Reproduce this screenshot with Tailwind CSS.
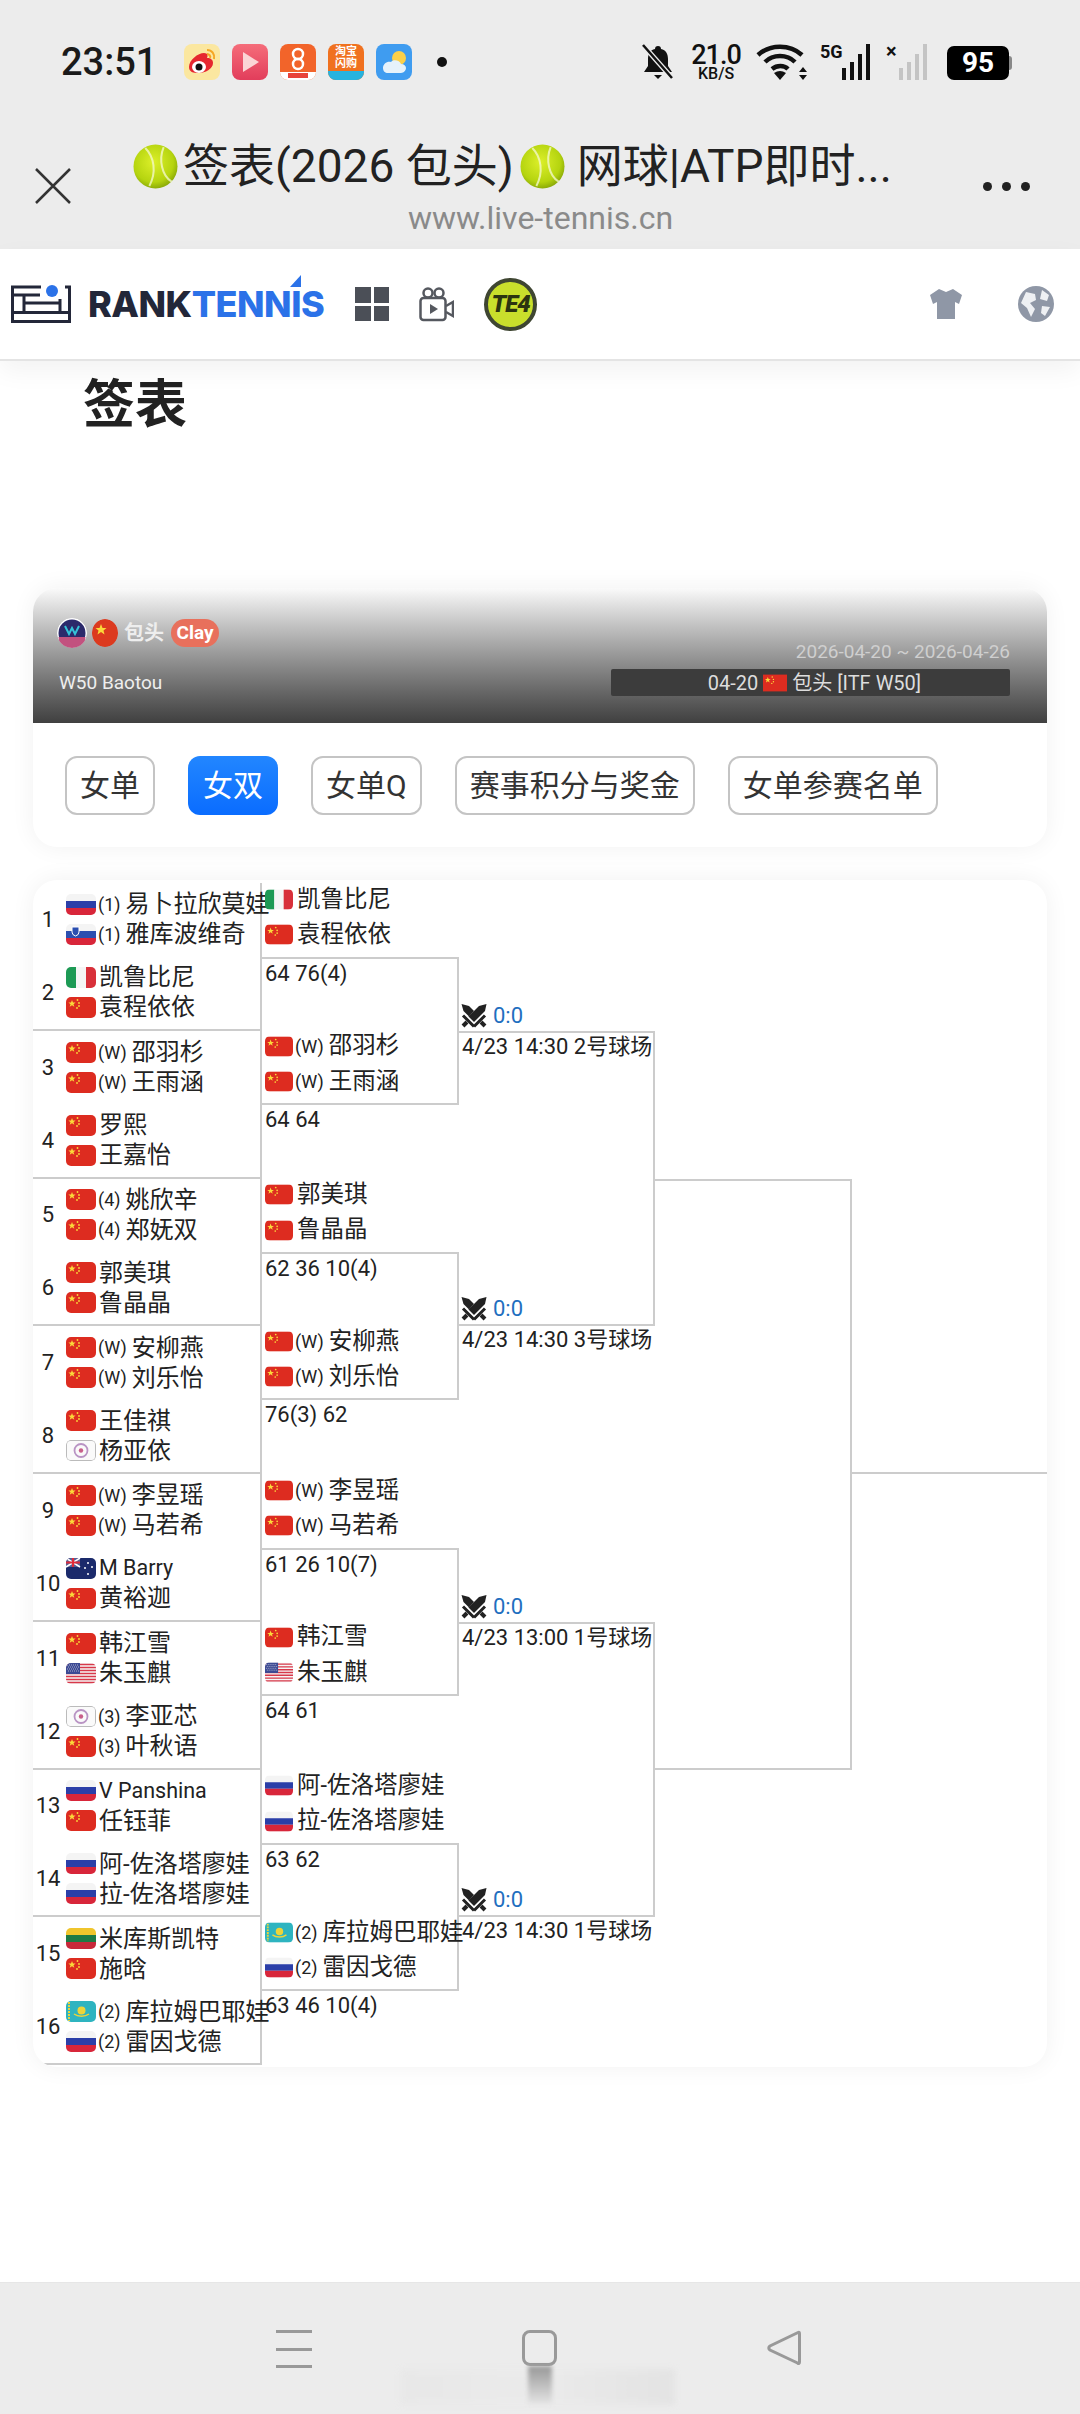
<!DOCTYPE html>
<html lang="en">
<head>
    <meta charset="UTF-8">
    <meta name="viewport" content="width=device-width, initial-scale=1.0">
    <title>签表</title>
    <script src="https://cdn.jsdelivr.net/npm/@tailwindcss/browser@4"></script>
</head>
<body class="w-[1080px] h-[2414px] overflow-hidden bg-white flex flex-col text-[#222] font-['Roboto','Noto_Sans_CJK_SC',sans-serif]">
    <!-- shared flags and small icons -->
    <svg class="absolute w-0 h-0" width="0" height="0">
        <defs>
            <radialGradient id="ballFill" cx="0.45" cy="0.4" r="0.65"><stop offset="0" stop-color="#dcef2a"/><stop offset="0.7" stop-color="#b5d40f"/><stop offset="1" stop-color="#7f9e06"/></radialGradient>
            <linearGradient id="playFill" x1="0" y1="0" x2="0" y2="1"><stop offset="0" stop-color="#f56d7a"/><stop offset="1" stop-color="#e23d5b"/></linearGradient>
        </defs>
        <symbol id="ball" viewBox="0 0 44 44"><circle cx="22" cy="22" r="21.5" fill="url(#ballFill)"/><path d="M12 4c9 9 11 24 4 37M30 3c-5 12-2 28 8 34" fill="none" stroke="#f2f7c8" stroke-width="2" opacity=".8"/></symbol>
        <symbol id="ru" viewBox="0 0 30 21"><rect width="30" height="7" fill="#f4f4f4"/><rect y="7" width="30" height="7" fill="#2b3fa8"/><rect y="14" width="30" height="7" fill="#d8263a"/></symbol>
        <symbol id="si" viewBox="0 0 30 21"><rect width="30" height="7" fill="#f4f4f4"/><rect y="7" width="30" height="7" fill="#2b4fb0"/><rect y="14" width="30" height="7" fill="#d8263a"/><path d="M6 3h7v5q0 3-3.500 4q-3.500-1-3.500-4z" fill="#2b4fb0" stroke="#fff"/></symbol>
        <symbol id="it" viewBox="0 0 30 21"><rect width="10" height="21" fill="#1d9a55"/><rect x="10" width="10" height="21" fill="#f5f5f5"/><rect x="20" width="10" height="21" fill="#d8303a"/></symbol>
        <symbol id="cn" viewBox="0 0 30 21"><rect width="30" height="21" fill="#dd2c20"/><path d="M6 3l1 2.600h2.600l-2.100 1.600.8 2.600L6 8.200 3.700 9.800l.8-2.600-2.100-1.600H5z" fill="#fbd93a"/><circle cx="11.500" cy="3" r=".9" fill="#fbd93a"/><circle cx="13" cy="6" r=".9" fill="#fbd93a"/><circle cx="13" cy="9" r=".9" fill="#fbd93a"/><circle cx="11" cy="11" r=".9" fill="#fbd93a"/></symbol>
        <symbol id="tw" viewBox="0 0 30 21"><rect x=".5" y=".5" width="29" height="20" rx="3.500" fill="#fafafa" stroke="#bbb"/><circle cx="15" cy="10.500" r="6.500" fill="none" stroke="#b994c4" stroke-width="1.800"/><circle cx="15" cy="10.500" r="2.200" fill="#c85f8a"/></symbol>
        <symbol id="nz" viewBox="0 0 30 21"><rect width="30" height="21" fill="#1b2a6b"/><rect width="14" height="9" fill="#5a5f94"/><path d="M0 0l14 9M14 0L0 9" stroke="#fff" stroke-width="1.500"/><path d="M7 0v9M0 4.500h14" stroke="#e02b3a" stroke-width="2"/><g fill="#fff"><circle cx="22" cy="5" r="1"/><circle cx="26" cy="9" r="1"/><circle cx="19" cy="10" r="1"/><circle cx="22" cy="16" r="1"/></g></symbol>
        <symbol id="us" viewBox="0 0 30 21"><rect width="30" height="21" fill="#f6f6f6"/><path d="M0 1.500h30M0 4.500h30M0 7.500h30M0 10.500h30M0 13.500h30M0 16.500h30M0 19.500h30" stroke="#d8384a" stroke-width="1.500"/><rect width="14" height="11" fill="#3b4a94"/><path d="M1 2h12M2 4h11M1 6h12M2 8h11" stroke="#ccd" stroke-width=".8" stroke-dasharray="1 1"/></symbol>
        <symbol id="lt" viewBox="0 0 30 21"><rect width="30" height="7" fill="#f0c52c"/><rect y="7" width="30" height="7" fill="#1e7a45"/><rect y="14" width="30" height="7" fill="#c8283a"/></symbol>
        <symbol id="kz" viewBox="0 0 30 21"><rect width="30" height="21" fill="#2eb4c0"/><circle cx="15.500" cy="9.500" r="4" fill="#ecd43a"/><path d="M8 13c4 3 11 3 15 0" stroke="#ecd43a" stroke-width="1.500" fill="none"/><path d="M3 1v19" stroke="#ecd43a" stroke-width="2" stroke-dasharray="2 1"/></symbol>
        <symbol id="swords" viewBox="0 0 26 24"><path d="M25.500 0l-7.500 2L7.500 12.500l5.500 5.500L24 7z" fill="#222"/><path d="M.5 0l7.500 2 5 5-5 5.500L2.500 7z" fill="#222"/><path d="M2 11.500l11 11M24 11.500L13 22.500" stroke="#222" stroke-width="3" fill="none"/><path d="M6 18l-4 4M20 18l4 4" stroke="#222" stroke-width="4" fill="none"/></symbol>
    </svg>

    <!-- browser chrome -->
    <header class="h-[249px] shrink-0 bg-[#ececec] flex flex-col">
        <div class="h-[124px] relative flex items-center pl-[61px] pr-[68px]">
            <span class="text-[38px] font-medium leading-none text-[#1a1a1a] w-[123px]">23:51</span>
            <div class="flex items-center gap-[12px]">
                <svg class="w-[36px] h-[36px] rounded-[8px]" viewBox="0 0 36 36"><rect width="36" height="36" fill="#fbe7a0"/><path d="M5 23c0-7 9-14 15-14 4 0 4 3 3 5 4 0 6 2 6 5 0 6-8 10-14 10S5 28 5 23z" fill="#e6272f"/><ellipse cx="15" cy="23" rx="7" ry="6" fill="#fff"/><circle cx="15" cy="23" r="3.500" fill="#111"/><path d="M23 6c5 0 8 4 7 9M23 10c2 0 4 2 3 4" fill="none" stroke="#f5a623" stroke-width="2"/></svg>
                <svg class="w-[36px] h-[36px] rounded-[8px]" viewBox="0 0 36 36"><rect width="36" height="36" fill="url(#playFill)"/><path d="M11 8l16 10-16 10z" fill="#fbd5d5"/></svg>
                <svg class="w-[36px] h-[36px] rounded-[8px]" viewBox="0 0 36 36"><rect width="36" height="36" fill="#f2642a"/><circle cx="18" cy="10" r="5" fill="none" stroke="#fff" stroke-width="2.500"/><circle cx="18" cy="20" r="5" fill="none" stroke="#fff" stroke-width="2.500"/><rect y="28" width="36" height="8" fill="#fff"/><rect x="8" y="29" width="20" height="5" fill="#e8433a"/></svg>
                <div class="w-[36px] h-[36px] rounded-[8px] overflow-hidden bg-[#f0711f] flex flex-col items-center text-white text-[11px] leading-[12px] font-bold">
                    <span class="mt-[2px]">淘宝</span><span>闪购</span>
                    <span class="mt-auto w-full h-[9px] bg-[#27b3df]"></span>
                </div>
                <svg class="w-[36px] h-[36px] rounded-[8px]" viewBox="0 0 36 36"><rect width="36" height="36" fill="#3f9cf0"/><circle cx="23" cy="14" r="7" fill="#fbd04a"/><path d="M7 24c0-4 4-7 8-6 2-3 9-2 10 2 3 0 5 2 5 4s-2 5-5 5H12c-3 0-5-2-5-5z" fill="#e6f2fb"/></svg>
                <span class="w-[10px] h-[10px] rounded-full bg-[#111] ml-[13px]"></span>
            </div>
            <div class="ml-auto flex items-center">
                <svg class="w-[36px] h-[36px]" viewBox="0 0 36 36"><path d="M18 2c2 0 3 1 3 3 5 1 7 5 7 10v7l4 6H4l4-6v-7c0-5 2-9 7-10 0-2 1-3 3-3z" fill="#111"/><path d="M14 31h8l-4 4z" fill="#111"/><path d="M3 1l29 33" stroke="#ececec" stroke-width="5"/><path d="M3 1l29 33" stroke="#111" stroke-width="2.500"/></svg>
                <div class="ml-[14px] w-[52px] flex flex-col items-center font-medium text-[#111]">
                    <span class="text-[27px] leading-[22px] tracking-[-1px]">21.0</span>
                    <span class="text-[16px] leading-[15px]">KB/S</span>
                </div>
                <svg class="ml-[14px] w-[52px] h-[36px]" viewBox="0 0 52 36"><path d="M2 11c12-11 32-11 44 0M9 18c8-8 22-8 30 0M16 25c5-4 12-4 16 0" fill="none" stroke="#111" stroke-width="4.500"/><path d="M24 36l-6-7q6-4 12 0z" fill="#111"/><path d="M47 23l4 5h-8zM47 36l4-5h-8z" fill="#111"/></svg>
                <div class="ml-[12px] w-[50px] h-[36px] relative flex items-end justify-end gap-[4px]">
                    <span class="absolute left-0 top-[-2px] text-[18px] leading-[20px] font-bold text-[#111]">5G</span>
                    <span class="w-[4px] h-[12px] bg-[#111]"></span><span class="w-[4px] h-[18px] bg-[#111]"></span><span class="w-[4px] h-[26px] bg-[#111]"></span><span class="w-[4px] h-[36px] bg-[#111]"></span>
                </div>
                <div class="ml-[16px] w-[41px] h-[36px] relative flex items-end justify-end gap-[4px]">
                    <span class="absolute left-0 top-[-3px] text-[20px] leading-[20px] font-bold text-[#111]">×</span>
                    <span class="w-[4px] h-[12px] bg-[#c4c4c4]"></span><span class="w-[4px] h-[18px] bg-[#c4c4c4]"></span><span class="w-[4px] h-[26px] bg-[#c4c4c4]"></span><span class="w-[4px] h-[36px] bg-[#c4c4c4]"></span>
                </div>
                <div class="ml-[20px] mt-[2px] flex items-center">
                    <span class="w-[62px] h-[34px] rounded-[7px] bg-black text-white text-[28px] leading-[34px] font-bold text-center">95</span>
                    <span class="w-[3px] h-[14px] rounded-r-full bg-[#888]"></span>
                </div>
            </div>
        </div>
        <div class="flex-1 flex pl-[35px] pr-[50px]">
            <svg class="mt-[44px] w-[36px] h-[36px] shrink-0" viewBox="0 0 36 36"><path d="M1 1l34 34M35 1L1 35" stroke="#333" stroke-width="2.500"/></svg>
            <div class="flex-1 flex flex-col items-center min-w-0">
                <div class="mt-[17px] h-[50px] flex items-center text-[46px] leading-[50px] text-[#222] whitespace-nowrap ml-[-29px]">
                    <svg class="w-[45px] h-[45px] mr-[5px] shrink-0"><use href="#ball"/></svg>签表(2026 包头)<svg class="w-[45px] h-[45px] mx-[6px] shrink-0"><use href="#ball"/></svg><span class="ml-[6px]">网球|ATP即时...</span>
                </div>
                <span class="mt-[9px] text-[32px] leading-[36px] text-[#8a8a8a] ml-[27px]">www.live-tennis.cn</span>
            </div>
            <div class="mt-[58px] w-[47px] flex justify-between shrink-0 h-[9px]">
                <span class="w-[9px] h-[9px] rounded-full bg-[#222]"></span><span class="w-[9px] h-[9px] rounded-full bg-[#222]"></span><span class="w-[9px] h-[9px] rounded-full bg-[#222]"></span>
            </div>
        </div>
    </header>

    <!-- site nav -->
    <nav class="h-[112px] shrink-0 relative z-10 bg-white border-b-2 border-[#e4e4e4] shadow-[0_10px_24px_rgba(0,0,0,0.05)] flex items-center pl-[11px] pr-[26px]">
        <svg class="w-[60px] h-[38px]" viewBox="0 0 60 38" fill="none" stroke="#232739" stroke-width="3"><path d="M30 2H1.500V36.500H58.500V2H54M1.500 10H29M13 10V27M13 18H48M1.500 27.500H58.500M49 14V27"/><circle cx="41" cy="6" r="6" fill="#2b72e8" stroke="none"/></svg>
        <span class="ml-[17px] text-[36px] leading-none font-extrabold tracking-[-0.5px] font-['Inter',sans-serif] text-[#232739] whitespace-nowrap">RANK<span class="text-[#2b72e8]">TENN<span class="relative">I<svg class="absolute left-[-1px] top-[-7px] w-[11px] h-[12px]" viewBox="0 0 11 12"><path d="M11 0v12H0z" fill="#2b72e8"/></svg></span>S</span></span>
        <div class="ml-[31px] w-[34px] h-[34px] grid grid-cols-2 gap-[3px]">
            <span class="bg-[#4b4f57]"></span><span class="bg-[#4b4f57]"></span><span class="bg-[#4b4f57]"></span><span class="bg-[#4b4f57]"></span>
        </div>
        <svg class="ml-[30px] w-[35px] h-[35px]" viewBox="0 0 35 35" fill="none" stroke="#55585f" stroke-width="2.500"><circle cx="9" cy="6" r="4.500"/><circle cx="20" cy="6" r="4.500"/><rect x="1.500" y="11" width="25" height="22" rx="3"/><path d="M27 19l7-4v14l-7-4"/><path d="M11 17l8 5-8 5z" fill="#55585f" stroke="none"/></svg>
        <div class="ml-[30px] w-[53px] h-[53px] rounded-full border-[4px] border-[#3f4632] bg-[#c9df2c] flex items-center justify-center text-[24px] leading-none font-black italic text-[#2c3410] tracking-[-1px]">TE4</div>
        <svg class="ml-auto w-[32px] h-[30px]" viewBox="0 0 32 30"><path d="M9 0l7 3 7-3 9 6-3 9-4-2v17H7V13l-4 2-3-9z" fill="#8f97a6"/></svg>
        <svg class="ml-[56px] w-[36px] h-[36px]" viewBox="0 0 36 36"><circle cx="18" cy="18" r="18" fill="#8f97a6"/><path d="M8 6l9 2 1 6-6 3 5 6-4 8-4-9-6-5zM24 4l7 5-2 6-7-2zM24 20l8 1-5 9-4-3z" fill="#eef0f3"/></svg>
    </nav>

    <main class="flex-1 min-h-0">
        <h1 class="ml-[83px] mt-[15px] text-[52px] leading-[60px] font-bold text-[#222]">签表</h1>

        <section class="mx-[33px] mt-[152px] rounded-[24px] overflow-hidden bg-white shadow-[0_0_24px_rgba(0,0,0,0.06)]">
            <div class="h-[135px] bg-gradient-to-b from-[#fafafa] to-[#404040] pt-[26px] pb-[27px] pl-[24px] pr-[37px] flex justify-between items-end">
                <div class="flex flex-col">
                    <div class="flex items-center">
                        <svg class="w-[30px] h-[30px] rounded-full" viewBox="0 0 30 30"><circle cx="15" cy="15" r="15" fill="#fff"/><circle cx="15" cy="15" r="13.500" fill="#2c2a6b"/><path d="M1.500 19h27a13.500 13.500 0 0 1-27 0z" fill="#c2527f"/><path d="M8 8l4 8 3-6 3 6 4-8" stroke="#35c3d8" stroke-width="2" fill="none"/></svg>
                        <svg class="ml-[5px] w-[26px] h-[28px] rounded-full" viewBox="0 0 26 28"><ellipse cx="13" cy="14" rx="13" ry="14" fill="#dc3a1f"/><path d="M9 5l1.500 4h4l-3 2.500 1 4L9 13l-3.500 2.500 1-4-3-2.500h4z" fill="#fbd93a"/></svg>
                        <span class="ml-[6px] text-[20px] leading-none font-bold text-[#eee]">包头</span>
                        <span class="ml-[7px] w-[48px] h-[28px] rounded-full bg-[#e8705c] text-white text-[19px] leading-[28px] font-bold text-center">Clay</span>
                    </div>
                    <span class="mt-[21px] h-[27px] text-[19px] leading-[27px] text-[#eee] ml-[2px]">W50 Baotou</span>
                </div>
                <div class="flex flex-col items-end">
                    <span class="text-[19px] leading-[24px] text-[#cfcfcf]">2026-04-20 ~ 2026-04-26</span>
                    <div class="mt-[5px] w-[399px] h-[27px] rounded-[2px] bg-[#3c3c3c] pl-[8px] flex items-center justify-center text-[20px] leading-none text-[#ddd]">04-20&nbsp;<svg class="w-[24px] h-[18px]"><use href="#cn"/></svg>&nbsp;包头 [ITF W50]</div>
                </div>
            </div>
            <div class="h-[124px] pt-[33px] pl-[32px] flex items-start gap-[33px] text-[30px] text-[#333]">
                <button class="h-[59px] px-[13px] rounded-[12px] border-2 border-[#c4c4c4] leading-none">女单</button>
                <button class="h-[59px] px-[15px] rounded-[12px] bg-gradient-to-b from-[#2286ff] to-[#0a6cff] text-white leading-none">女双</button>
                <button class="h-[59px] px-[13px] rounded-[12px] border-2 border-[#c4c4c4] leading-none">女单Q</button>
                <button class="h-[59px] px-[13px] rounded-[12px] border-2 border-[#c4c4c4] leading-none">赛事积分与奖金</button>
                <button class="h-[59px] px-[13px] rounded-[12px] border-2 border-[#c4c4c4] leading-none">女单参赛名单</button>
            </div>
        </section>

        <!-- draw -->
        <section class="mx-[33px] mt-[33px] h-[1187px] pt-[3px] rounded-[24px] overflow-hidden bg-white shadow-[0_0_24px_rgba(0,0,0,0.06)] flex text-[22px] whitespace-nowrap">
            <div class="w-[229px] shrink-0 flex flex-col text-[24px]">
                <div class="h-[147.75px] border-r-2 border-b-2 border-[#ccc] flex flex-col">
                    <div class="h-1/2 flex items-center"><span class="w-[30px] shrink-0 text-center text-[22px]">1</span><div class="ml-[3px] flex flex-col">
                        <div class="h-[30px] flex items-center"><svg class="w-[30px] h-[21px] shrink-0 rounded-[5px] mr-[2px]"><use href="#ru"/></svg><span class="text-[18px] mr-[5px]">(1)</span>易卜拉欣莫娃</div>
                        <div class="h-[30px] flex items-center"><svg class="w-[30px] h-[21px] shrink-0 rounded-[5px] mr-[2px]"><use href="#si"/></svg><span class="text-[18px] mr-[5px]">(1)</span>雅库波维奇</div>
                    </div></div>
                    <div class="h-1/2 flex items-center"><span class="w-[30px] shrink-0 text-center text-[22px]">2</span><div class="ml-[3px] flex flex-col">
                        <div class="h-[30px] flex items-center"><svg class="w-[30px] h-[21px] shrink-0 rounded-[5px] mr-[3px]"><use href="#it"/></svg>凯鲁比尼</div>
                        <div class="h-[30px] flex items-center"><svg class="w-[30px] h-[21px] shrink-0 rounded-[5px] mr-[3px]"><use href="#cn"/></svg>袁程依依</div>
                    </div></div>
                </div>
                <div class="h-[147.75px] border-r-2 border-b-2 border-[#ccc] flex flex-col">
                    <div class="h-1/2 flex items-center"><span class="w-[30px] shrink-0 text-center text-[22px]">3</span><div class="ml-[3px] flex flex-col">
                        <div class="h-[30px] flex items-center"><svg class="w-[30px] h-[21px] shrink-0 rounded-[5px] mr-[2px]"><use href="#cn"/></svg><span class="text-[18px] mr-[5px]">(W)</span>邵羽杉</div>
                        <div class="h-[30px] flex items-center"><svg class="w-[30px] h-[21px] shrink-0 rounded-[5px] mr-[2px]"><use href="#cn"/></svg><span class="text-[18px] mr-[5px]">(W)</span>王雨涵</div>
                    </div></div>
                    <div class="h-1/2 flex items-center"><span class="w-[30px] shrink-0 text-center text-[22px]">4</span><div class="ml-[3px] flex flex-col">
                        <div class="h-[30px] flex items-center"><svg class="w-[30px] h-[21px] shrink-0 rounded-[5px] mr-[3px]"><use href="#cn"/></svg>罗熙</div>
                        <div class="h-[30px] flex items-center"><svg class="w-[30px] h-[21px] shrink-0 rounded-[5px] mr-[3px]"><use href="#cn"/></svg>王嘉怡</div>
                    </div></div>
                </div>
                <div class="h-[147.75px] border-r-2 border-b-2 border-[#ccc] flex flex-col">
                    <div class="h-1/2 flex items-center"><span class="w-[30px] shrink-0 text-center text-[22px]">5</span><div class="ml-[3px] flex flex-col">
                        <div class="h-[30px] flex items-center"><svg class="w-[30px] h-[21px] shrink-0 rounded-[5px] mr-[2px]"><use href="#cn"/></svg><span class="text-[18px] mr-[5px]">(4)</span>姚欣辛</div>
                        <div class="h-[30px] flex items-center"><svg class="w-[30px] h-[21px] shrink-0 rounded-[5px] mr-[2px]"><use href="#cn"/></svg><span class="text-[18px] mr-[5px]">(4)</span>郑妩双</div>
                    </div></div>
                    <div class="h-1/2 flex items-center"><span class="w-[30px] shrink-0 text-center text-[22px]">6</span><div class="ml-[3px] flex flex-col">
                        <div class="h-[30px] flex items-center"><svg class="w-[30px] h-[21px] shrink-0 rounded-[5px] mr-[3px]"><use href="#cn"/></svg>郭美琪</div>
                        <div class="h-[30px] flex items-center"><svg class="w-[30px] h-[21px] shrink-0 rounded-[5px] mr-[3px]"><use href="#cn"/></svg>鲁晶晶</div>
                    </div></div>
                </div>
                <div class="h-[147.75px] border-r-2 border-b-2 border-[#ccc] flex flex-col">
                    <div class="h-1/2 flex items-center"><span class="w-[30px] shrink-0 text-center text-[22px]">7</span><div class="ml-[3px] flex flex-col">
                        <div class="h-[30px] flex items-center"><svg class="w-[30px] h-[21px] shrink-0 rounded-[5px] mr-[2px]"><use href="#cn"/></svg><span class="text-[18px] mr-[5px]">(W)</span>安柳燕</div>
                        <div class="h-[30px] flex items-center"><svg class="w-[30px] h-[21px] shrink-0 rounded-[5px] mr-[2px]"><use href="#cn"/></svg><span class="text-[18px] mr-[5px]">(W)</span>刘乐怡</div>
                    </div></div>
                    <div class="h-1/2 flex items-center"><span class="w-[30px] shrink-0 text-center text-[22px]">8</span><div class="ml-[3px] flex flex-col">
                        <div class="h-[30px] flex items-center"><svg class="w-[30px] h-[21px] shrink-0 rounded-[5px] mr-[3px]"><use href="#cn"/></svg>王佳祺</div>
                        <div class="h-[30px] flex items-center"><svg class="w-[30px] h-[21px] shrink-0 rounded-[5px] mr-[3px]"><use href="#tw"/></svg>杨亚依</div>
                    </div></div>
                </div>
                <div class="h-[147.75px] border-r-2 border-b-2 border-[#ccc] flex flex-col">
                    <div class="h-1/2 flex items-center"><span class="w-[30px] shrink-0 text-center text-[22px]">9</span><div class="ml-[3px] flex flex-col">
                        <div class="h-[30px] flex items-center"><svg class="w-[30px] h-[21px] shrink-0 rounded-[5px] mr-[2px]"><use href="#cn"/></svg><span class="text-[18px] mr-[5px]">(W)</span>李昱瑶</div>
                        <div class="h-[30px] flex items-center"><svg class="w-[30px] h-[21px] shrink-0 rounded-[5px] mr-[2px]"><use href="#cn"/></svg><span class="text-[18px] mr-[5px]">(W)</span>马若希</div>
                    </div></div>
                    <div class="h-1/2 flex items-center"><span class="w-[30px] shrink-0 text-center text-[22px]">10</span><div class="ml-[3px] flex flex-col">
                        <div class="h-[30px] flex items-center text-[21.5px]"><svg class="w-[30px] h-[21px] shrink-0 rounded-[5px] mr-[3px]"><use href="#nz"/></svg>M Barry</div>
                        <div class="h-[30px] flex items-center"><svg class="w-[30px] h-[21px] shrink-0 rounded-[5px] mr-[3px]"><use href="#cn"/></svg>黄裕迦</div>
                    </div></div>
                </div>
                <div class="h-[147.75px] border-r-2 border-b-2 border-[#ccc] flex flex-col">
                    <div class="h-1/2 flex items-center"><span class="w-[30px] shrink-0 text-center text-[22px]">11</span><div class="ml-[3px] flex flex-col">
                        <div class="h-[30px] flex items-center"><svg class="w-[30px] h-[21px] shrink-0 rounded-[5px] mr-[3px]"><use href="#cn"/></svg>韩江雪</div>
                        <div class="h-[30px] flex items-center"><svg class="w-[30px] h-[21px] shrink-0 rounded-[5px] mr-[3px]"><use href="#us"/></svg>朱玉麒</div>
                    </div></div>
                    <div class="h-1/2 flex items-center"><span class="w-[30px] shrink-0 text-center text-[22px]">12</span><div class="ml-[3px] flex flex-col">
                        <div class="h-[30px] flex items-center"><svg class="w-[30px] h-[21px] shrink-0 rounded-[5px] mr-[2px]"><use href="#tw"/></svg><span class="text-[18px] mr-[5px]">(3)</span>李亚芯</div>
                        <div class="h-[30px] flex items-center"><svg class="w-[30px] h-[21px] shrink-0 rounded-[5px] mr-[2px]"><use href="#cn"/></svg><span class="text-[18px] mr-[5px]">(3)</span>叶秋语</div>
                    </div></div>
                </div>
                <div class="h-[147.75px] border-r-2 border-b-2 border-[#ccc] flex flex-col">
                    <div class="h-1/2 flex items-center"><span class="w-[30px] shrink-0 text-center text-[22px]">13</span><div class="ml-[3px] flex flex-col">
                        <div class="h-[30px] flex items-center text-[21.5px]"><svg class="w-[30px] h-[21px] shrink-0 rounded-[5px] mr-[3px]"><use href="#ru"/></svg>V Panshina</div>
                        <div class="h-[30px] flex items-center"><svg class="w-[30px] h-[21px] shrink-0 rounded-[5px] mr-[3px]"><use href="#cn"/></svg>任钰菲</div>
                    </div></div>
                    <div class="h-1/2 flex items-center"><span class="w-[30px] shrink-0 text-center text-[22px]">14</span><div class="ml-[3px] flex flex-col">
                        <div class="h-[30px] flex items-center"><svg class="w-[30px] h-[21px] shrink-0 rounded-[5px] mr-[3px]"><use href="#ru"/></svg>阿-佐洛塔廖娃</div>
                        <div class="h-[30px] flex items-center"><svg class="w-[30px] h-[21px] shrink-0 rounded-[5px] mr-[3px]"><use href="#ru"/></svg>拉-佐洛塔廖娃</div>
                    </div></div>
                </div>
                <div class="h-[147.75px] border-r-2 border-b-2 border-[#ccc] flex flex-col">
                    <div class="h-1/2 flex items-center"><span class="w-[30px] shrink-0 text-center text-[22px]">15</span><div class="ml-[3px] flex flex-col">
                        <div class="h-[30px] flex items-center"><svg class="w-[30px] h-[21px] shrink-0 rounded-[5px] mr-[3px]"><use href="#lt"/></svg>米库斯凯特</div>
                        <div class="h-[30px] flex items-center"><svg class="w-[30px] h-[21px] shrink-0 rounded-[5px] mr-[3px]"><use href="#cn"/></svg>施晗</div>
                    </div></div>
                    <div class="h-1/2 flex items-center"><span class="w-[30px] shrink-0 text-center text-[22px]">16</span><div class="ml-[3px] flex flex-col">
                        <div class="h-[30px] flex items-center"><svg class="w-[30px] h-[21px] shrink-0 rounded-[5px] mr-[2px]"><use href="#kz"/></svg><span class="text-[18px] mr-[5px]">(2)</span>库拉姆巴耶娃</div>
                        <div class="h-[30px] flex items-center"><svg class="w-[30px] h-[21px] shrink-0 rounded-[5px] mr-[2px]"><use href="#ru"/></svg><span class="text-[18px] mr-[5px]">(2)</span>雷因戈德</div>
                    </div></div>
                </div>
            </div>

            <!-- second round -->
            <div class="w-[197px] shrink-0 flex flex-col text-[23.5px]">
                <div class="h-[73.875px] pl-[3px] pb-[6px] flex flex-col justify-center">
                    <div class="h-[36px] flex items-center"><svg class="w-[28px] h-[21px] shrink-0 rounded-[5px] mr-[4px]"><use href="#it"/></svg>凯鲁比尼</div>
                    <div class="h-[36px] flex items-center"><svg class="w-[28px] h-[21px] shrink-0 rounded-[5px] mr-[4px]"><use href="#cn"/></svg>袁程依依</div>
                </div>
                <div class="h-[73.875px] pl-[3px] border-t-2 border-r-2 border-[#ccc] text-[22px] leading-[30px]">64 76(4)</div>
                <div class="h-[73.875px] pl-[3px] pb-[6px] border-r-2 border-b-2 border-[#ccc] flex flex-col justify-center">
                    <div class="h-[36px] flex items-center"><svg class="w-[28px] h-[21px] shrink-0 rounded-[5px] mr-[2px]"><use href="#cn"/></svg><span class="text-[18px] mr-[5px]">(W)</span>邵羽杉</div>
                    <div class="h-[36px] flex items-center"><svg class="w-[28px] h-[21px] shrink-0 rounded-[5px] mr-[2px]"><use href="#cn"/></svg><span class="text-[18px] mr-[5px]">(W)</span>王雨涵</div>
                </div>
                <div class="h-[73.875px] pl-[3px] text-[22px] leading-[30px]">64 64</div>

                <div class="h-[73.875px] pl-[3px] pb-[6px] flex flex-col justify-center">
                    <div class="h-[36px] flex items-center"><svg class="w-[28px] h-[21px] shrink-0 rounded-[5px] mr-[4px]"><use href="#cn"/></svg>郭美琪</div>
                    <div class="h-[36px] flex items-center"><svg class="w-[28px] h-[21px] shrink-0 rounded-[5px] mr-[4px]"><use href="#cn"/></svg>鲁晶晶</div>
                </div>
                <div class="h-[73.875px] pl-[3px] border-t-2 border-r-2 border-[#ccc] text-[22px] leading-[30px]">62 36 10(4)</div>
                <div class="h-[73.875px] pl-[3px] pb-[6px] border-r-2 border-b-2 border-[#ccc] flex flex-col justify-center">
                    <div class="h-[36px] flex items-center"><svg class="w-[28px] h-[21px] shrink-0 rounded-[5px] mr-[2px]"><use href="#cn"/></svg><span class="text-[18px] mr-[5px]">(W)</span>安柳燕</div>
                    <div class="h-[36px] flex items-center"><svg class="w-[28px] h-[21px] shrink-0 rounded-[5px] mr-[2px]"><use href="#cn"/></svg><span class="text-[18px] mr-[5px]">(W)</span>刘乐怡</div>
                </div>
                <div class="h-[73.875px] pl-[3px] text-[22px] leading-[30px]">76(3) 62</div>

                <div class="h-[73.875px] pl-[3px] pb-[6px] flex flex-col justify-center">
                    <div class="h-[36px] flex items-center"><svg class="w-[28px] h-[21px] shrink-0 rounded-[5px] mr-[2px]"><use href="#cn"/></svg><span class="text-[18px] mr-[5px]">(W)</span>李昱瑶</div>
                    <div class="h-[36px] flex items-center"><svg class="w-[28px] h-[21px] shrink-0 rounded-[5px] mr-[2px]"><use href="#cn"/></svg><span class="text-[18px] mr-[5px]">(W)</span>马若希</div>
                </div>
                <div class="h-[73.875px] pl-[3px] border-t-2 border-r-2 border-[#ccc] text-[22px] leading-[30px]">61 26 10(7)</div>
                <div class="h-[73.875px] pl-[3px] pb-[6px] border-r-2 border-b-2 border-[#ccc] flex flex-col justify-center">
                    <div class="h-[36px] flex items-center"><svg class="w-[28px] h-[21px] shrink-0 rounded-[5px] mr-[4px]"><use href="#cn"/></svg>韩江雪</div>
                    <div class="h-[36px] flex items-center"><svg class="w-[28px] h-[21px] shrink-0 rounded-[5px] mr-[4px]"><use href="#us"/></svg>朱玉麒</div>
                </div>
                <div class="h-[73.875px] pl-[3px] text-[22px] leading-[30px]">64 61</div>

                <div class="h-[73.875px] pl-[3px] pb-[6px] flex flex-col justify-center">
                    <div class="h-[36px] flex items-center"><svg class="w-[28px] h-[21px] shrink-0 rounded-[5px] mr-[4px]"><use href="#ru"/></svg>阿-佐洛塔廖娃</div>
                    <div class="h-[36px] flex items-center"><svg class="w-[28px] h-[21px] shrink-0 rounded-[5px] mr-[4px]"><use href="#ru"/></svg>拉-佐洛塔廖娃</div>
                </div>
                <div class="h-[73.875px] pl-[3px] border-t-2 border-r-2 border-[#ccc] text-[22px] leading-[30px]">63 62</div>
                <div class="h-[73.875px] pl-[3px] pb-[6px] border-r-2 border-b-2 border-[#ccc] flex flex-col justify-center">
                    <div class="h-[36px] flex items-center"><svg class="w-[28px] h-[21px] shrink-0 rounded-[5px] mr-[2px]"><use href="#kz"/></svg><span class="text-[18px] mr-[5px]">(2)</span>库拉姆巴耶娃</div>
                    <div class="h-[36px] flex items-center"><svg class="w-[28px] h-[21px] shrink-0 rounded-[5px] mr-[2px]"><use href="#ru"/></svg><span class="text-[18px] mr-[5px]">(2)</span>雷因戈德</div>
                </div>
                <div class="h-[73.875px] pl-[3px] text-[22px] leading-[30px]">63 46 10(4)</div>
            </div>

            <!-- quarter finals -->
            <div class="w-[196px] shrink-0 flex flex-col">
                <div class="h-[147.75px] pl-[2px] pb-[3px] flex items-end gap-[6px]"><svg class="w-[26px] h-[24px]"><use href="#swords"/></svg><span class="text-[#1f6fbf] leading-[24px]">0:0</span></div>
                <div class="h-[147.75px] pl-[3px] border-t-2 border-r-2 border-[#ccc] leading-[28px]">4/23 14:30 2号球场</div>
                <div class="h-[147.75px] pl-[2px] pb-[3px] border-r-2 border-b-2 border-[#ccc] flex items-end gap-[6px]"><svg class="w-[26px] h-[24px]"><use href="#swords"/></svg><span class="text-[#1f6fbf] leading-[24px]">0:0</span></div>
                <div class="h-[147.75px] pl-[3px] leading-[28px]">4/23 14:30 3号球场</div>
                <div class="h-[147.75px] pl-[2px] pb-[3px] flex items-end gap-[6px]"><svg class="w-[26px] h-[24px]"><use href="#swords"/></svg><span class="text-[#1f6fbf] leading-[24px]">0:0</span></div>
                <div class="h-[147.75px] pl-[3px] border-t-2 border-r-2 border-[#ccc] leading-[28px]">4/23 13:00 1号球场</div>
                <div class="h-[147.75px] pl-[2px] pb-[3px] border-r-2 border-b-2 border-[#ccc] flex items-end gap-[6px]"><svg class="w-[26px] h-[24px]"><use href="#swords"/></svg><span class="text-[#1f6fbf] leading-[24px]">0:0</span></div>
                <div class="h-[147.75px] pl-[3px] leading-[28px]">4/23 14:30 1号球场</div>
            </div>

            <!-- semi final and final lines -->
            <div class="w-[197px] shrink-0 flex flex-col">
                <div class="h-[295.5px]"></div>
                <div class="h-[591px] border-t-2 border-r-2 border-b-2 border-[#ccc]"></div>
            </div>
            <div class="flex-1 flex flex-col">
                <div class="h-[591px] border-b-2 border-[#ccc]"></div>
            </div>
        </section>
    </main>

    <!-- system nav -->
    <footer class="h-[132px] shrink-0 relative bg-[#ececec] border-t border-[#e6e6e6] flex justify-center gap-[210px] pt-[47px] pr-[3px]">
        <div class="w-[36px] h-[38px] flex flex-col justify-between"><span class="h-[3px] bg-[#999]"></span><span class="h-[3px] bg-[#999]"></span><span class="h-[3px] bg-[#999]"></span></div>
        <div class="w-[35px] h-[36px] rounded-[8px] border-[3px] border-[#999]"></div>
        <svg class="w-[34px] h-[36px]" viewBox="0 0 34 36"><path d="M31 2.500Q32.500 1.500 32.500 4V32Q32.500 34.500 30.500 33L3 20Q0.500 18 3 16z" fill="none" stroke="#999" stroke-width="3"/></svg>
        <div class="absolute left-[400px] top-[86px] w-[275px] h-[36px] bg-gradient-to-r from-[#e6e6e6] via-[#ebebeb] to-[#dedede] blur-[3px] opacity-60"></div>
        <div class="absolute left-[528px] top-[83px] w-[24px] h-[38px] bg-gradient-to-b from-[#999] to-[#e4e4e4] blur-[2px]"></div>
    </footer>
</body>
</html>
